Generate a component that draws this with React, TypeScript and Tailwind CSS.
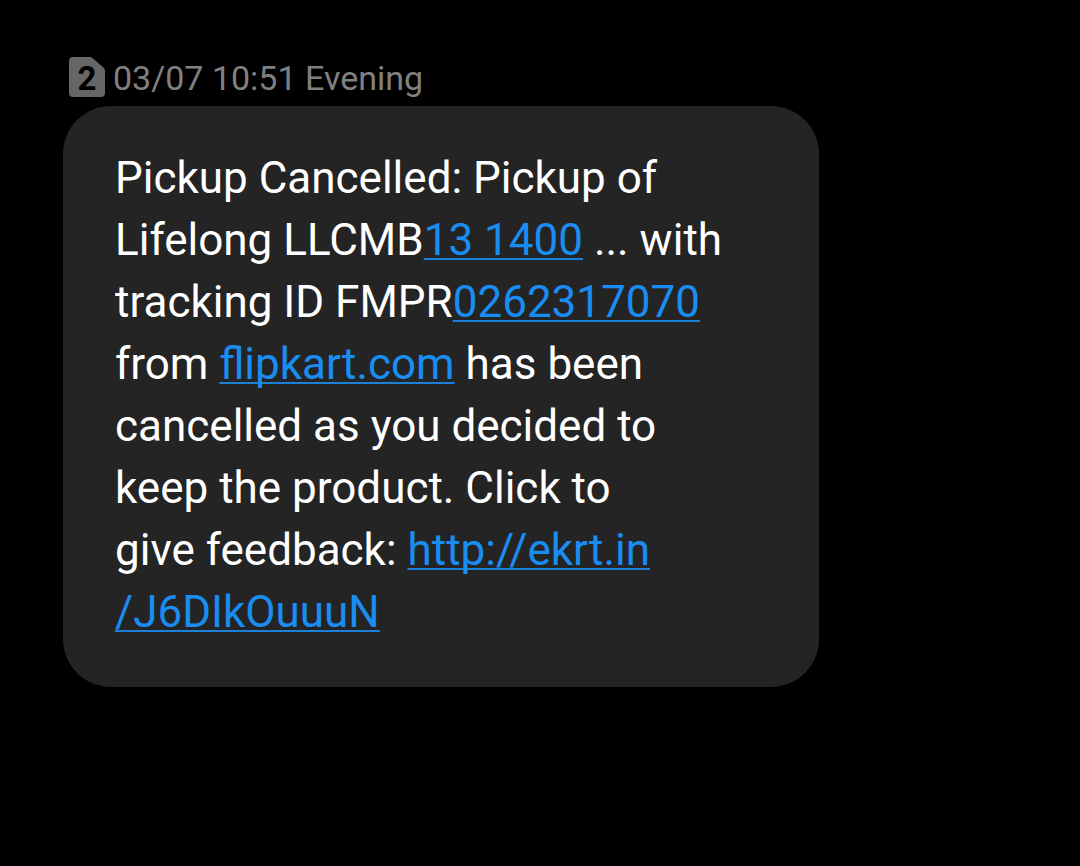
const linkClass =
  "text-[#1a8df2] underline decoration-[#1a80d8] decoration-2 underline-offset-3 [text-decoration-skip-ink:none]";

function SimBadge() {
  return (
    <svg width="36" height="40" viewBox="0 0 36 40" role="img" aria-label="SIM 2" className="shrink-0">
      <path
        d="M4 0H20.5Q22.2 0 23.5 1.1L34.5 10.4Q36 11.7 36 13.5V36Q36 40 32 40H4Q0 40 0 36V4Q0 0 4 0Z"
        fill="#666666"
      />
      <text x="18" y="33" textAnchor="middle" fontSize="33" fontWeight="700" fontFamily="Roboto, sans-serif" fill="#000000">
        2
      </text>
    </svg>
  );
}

export default function App() {
  return (
    <main className="min-h-screen bg-black px-[63px] pt-14 font-['Roboto',sans-serif]">
      <header className="flex h-[50px] items-start gap-2 pl-1.5 pt-px">
        <SimBadge />
        <time className="text-[34px] leading-[42px] text-[#808080]">03/07 10:51 Evening</time>
      </header>
      <article className="w-full max-w-[756px] rounded-[48px] bg-[#242424] px-[52px] pt-[41px] pb-11 text-[44px] leading-[62px] text-white">
        <p>
          Pickup Cancelled: Pickup of
          <br />
          Lifelong LLCMB<a href="tel:131400" className={linkClass}>13 1400</a> ... with
          <br />
          tracking ID FMPR<a href="tel:0262317070" className={linkClass}>0262317070</a>
          <br />
          from <a href="http://flipkart.com" className={linkClass}>flipkart.com</a> has been
          <br />
          cancelled as you decided to
          <br />
          keep the product. Click to
          <br />
          give feedback:{" "}
          <a href="http://ekrt.in/J6DIkOuuuN" className={linkClass}>
            http://ekrt.in
            <br />
            /J6DIkOuuuN
          </a>
        </p>
      </article>
    </main>
  );
}
